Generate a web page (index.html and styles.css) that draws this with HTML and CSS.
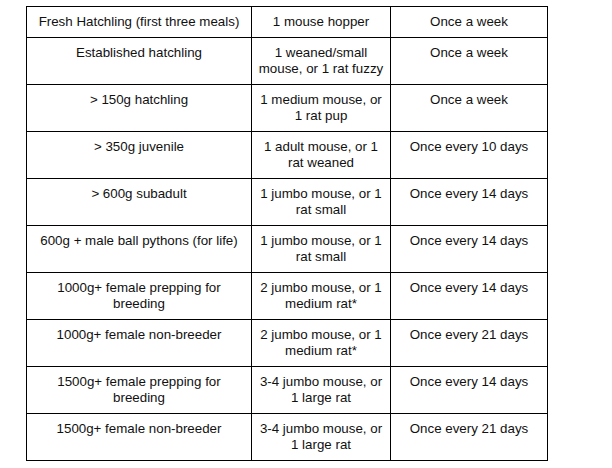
FILE: index.html
```html
<!DOCTYPE html>
<html>
<head>
<meta charset="utf-8">
<link rel="stylesheet" href="styles.css">
</head>
<body>
<table class="feed">
  <colgroup>
    <col class="c1">
    <col class="c2">
    <col class="c3">
  </colgroup>
  <tr class="first">
    <td>Fresh Hatchling (first three meals)</td>
    <td>1 mouse hopper</td>
    <td>Once a week</td>
  </tr>
  <tr>
    <td>Established hatchling</td>
    <td>1 weaned/small<br>mouse, or 1 rat fuzzy</td>
    <td>Once a week</td>
  </tr>
  <tr>
    <td>&gt; 150g hatchling</td>
    <td>1 medium mouse, or<br>1 rat pup</td>
    <td>Once a week</td>
  </tr>
  <tr>
    <td>&gt; 350g juvenile</td>
    <td>1 adult mouse, or 1<br>rat weaned</td>
    <td>Once every 10 days</td>
  </tr>
  <tr>
    <td>&gt; 600g subadult</td>
    <td>1 jumbo mouse, or 1<br>rat small</td>
    <td>Once every 14 days</td>
  </tr>
  <tr>
    <td>600g + male ball pythons (for life)</td>
    <td>1 jumbo mouse, or 1<br>rat small</td>
    <td>Once every 14 days</td>
  </tr>
  <tr>
    <td>1000g+ female prepping for<br>breeding</td>
    <td>2 jumbo mouse, or 1<br>medium rat*</td>
    <td>Once every 14 days</td>
  </tr>
  <tr>
    <td>1000g+ female non-breeder</td>
    <td>2 jumbo mouse, or 1<br>medium rat*</td>
    <td>Once every 21 days</td>
  </tr>
  <tr>
    <td>1500g+ female prepping for<br>breeding</td>
    <td>3-4 jumbo mouse, or<br>1 large rat</td>
    <td>Once every 14 days</td>
  </tr>
  <tr>
    <td>1500g+ female non-breeder</td>
    <td>3-4 jumbo mouse, or<br>1 large rat</td>
    <td>Once every 21 days</td>
  </tr>
</table>
</body>
</html>
```

FILE: styles.css
```css
html, body {
  margin: 0;
  background: #ffffff;
}
body {
  padding: 6px 0 0 26px;
  font-family: "Liberation Sans", Arial, sans-serif;
  font-size: 13.33px;
  color: #111111;
}
.feed {
  border-collapse: collapse;
  table-layout: fixed;
  width: 521px;
}
.c1 { width: 225px; }
.c2 { width: 139px; }
.c3 { width: 157px; }
.feed td {
  border: 1px solid #000000;
  padding: 7px 6px;
  line-height: 16px;
  height: 32px;
  text-align: center;
  vertical-align: top;
  white-space: nowrap;
}
.feed tr.first td {
  height: 16px;
}
```
